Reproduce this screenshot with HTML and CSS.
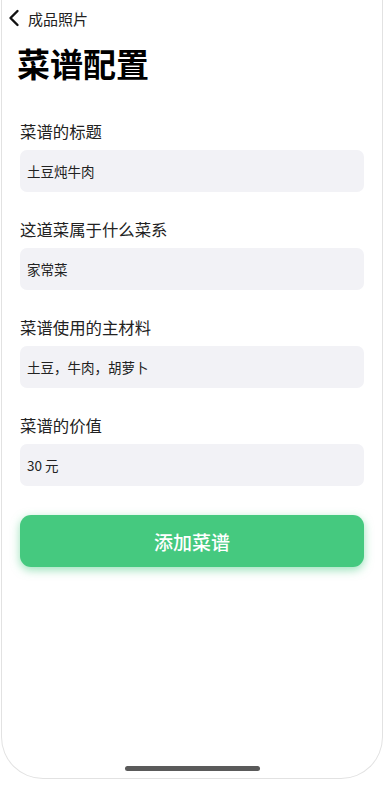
FILE: index.html
```html
<!DOCTYPE html>
<html lang="zh-CN">

<head>
    <meta charset="UTF-8" />
    <meta name="viewport" content="width=device-width, initial-scale=1.0" />
    <title>菜谱配置</title>
    <link rel="stylesheet" href="styles.css">
</head>

<body>

    <div class="phone">
        <div class="nav">
            <svg class="nav__back" width="12" height="18" viewBox="0 0 12 18">
                <path d="M9.5 2 L2.5 9 L9.5 16" fill="none" stroke="#111" stroke-width="2.4" stroke-linecap="round" stroke-linejoin="round" />
            </svg>
            <span class="nav__title">成品照片</span>
        </div>

        <h1 class="page__title">菜谱配置</h1>

        <form class="recipe">
            <div class="recipe__field">
                <label class="recipe__label">菜谱的标题</label>
                <div class="recipe__input">土豆炖牛肉</div>
            </div>
            <div class="recipe__field">
                <label class="recipe__label">这道菜属于什么菜系</label>
                <div class="recipe__input">家常菜</div>
            </div>
            <div class="recipe__field">
                <label class="recipe__label">菜谱使用的主材料</label>
                <div class="recipe__input">土豆，牛肉，胡萝卜</div>
            </div>
            <div class="recipe__field">
                <label class="recipe__label">菜谱的价值</label>
                <div class="recipe__input">30 元</div>
            </div>
            <button type="button" class="recipe__submit">添加菜谱</button>
        </form>

        <div class="home-bar"></div>
    </div>

</body>

</html>
```

FILE: styles.css
```css
body {
    margin: 0;
    background: #fff;
    font-family: "Noto Sans CJK SC", "Noto Sans", sans-serif;
    color: #1c1c1e;
}

.phone {
    box-sizing: border-box;
    width: 382px;
    height: 779px;
    margin-left: 1px;
    border: 1px solid #e2e2e2;
    border-top: none;
    border-radius: 0 0 42px 42px;
    display: flex;
    flex-direction: column;
    padding: 0 18px;
}

.nav {
    height: 36px;
    display: flex;
    align-items: center;
    margin-left: -12px;
}

.nav__back {
    margin-right: 8px;
}

.nav__title {
    font-size: 15px;
    color: #222;
}

.page__title {
    margin: 6px 0 0 -3px;
    font-size: 33px;
    line-height: 42px;
    font-weight: 700;
    color: #000;
}

.recipe {
    margin-top: 36px;
    display: flex;
    flex-direction: column;
}

.recipe__field {
    display: flex;
    flex-direction: column;
    margin-bottom: 26px;
}

.recipe__label {
    font-size: 16.4px;
    line-height: 22px;
    color: #222;
    margin-bottom: 8px;
}

.recipe__input {
    height: 42px;
    box-sizing: border-box;
    padding: 0 7px;
    display: flex;
    align-items: center;
    background: #f2f2f6;
    border-radius: 7px;
    font-size: 13.5px;
    color: #222;
}

.recipe__submit {
    margin-top: 3px;
    height: 52px;
    border: none;
    border-radius: 11px;
    background: #45c97f;
    color: #fff;
    font-family: inherit;
    font-size: 19px;
    font-weight: 500;
    box-shadow: 0 3px 10px rgba(69, 201, 127, 0.55);
}

.home-bar {
    margin: auto auto 7px;
    width: 135px;
    height: 5px;
    border-radius: 3px;
    background: #5a5a5a;
}
```
